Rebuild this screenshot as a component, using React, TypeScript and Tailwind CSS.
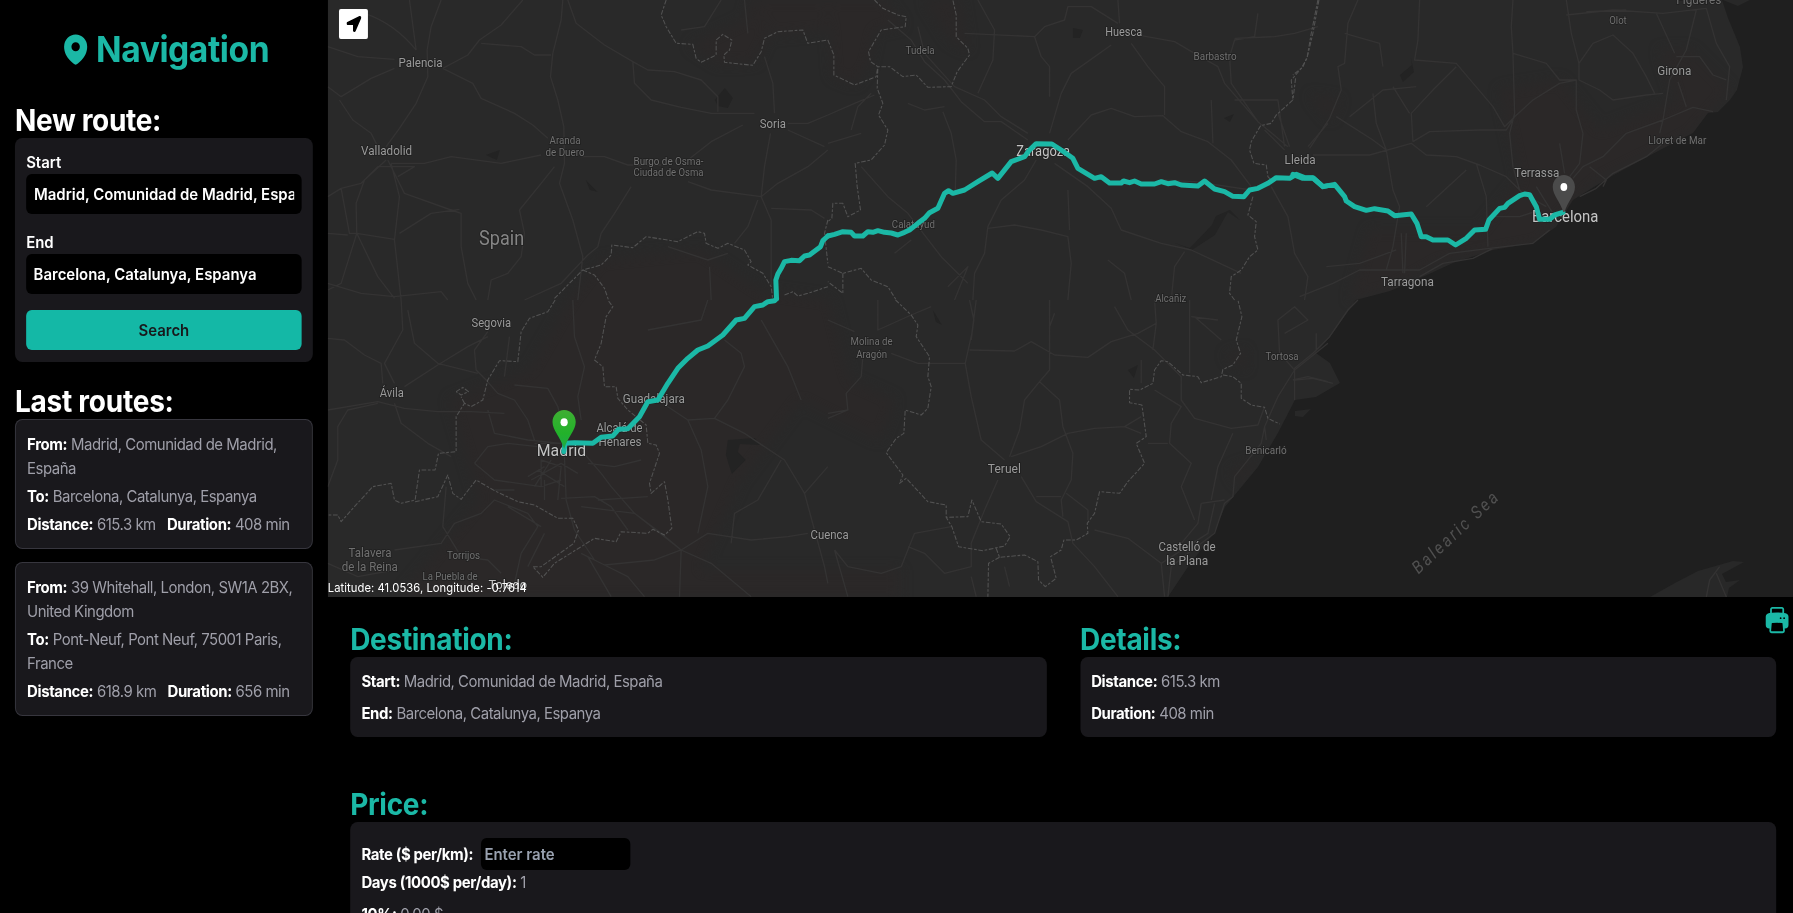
import { FaLocationArrow } from "react-icons/fa";
import { HiMapPin, HiPrinter } from "react-icons/hi2";

type Sector = {
  x: number;
  y: number;
  roads: string;
  borders: string;
  route: string;
};

// The map is drawn in sectors; each one has three units to the pixel.
const sectors: Sector[] = [
  {
    x: 328,
    y: 0,
    roads:
      "M340 0L310 80L298 150L300 230L265 310L215 385L175 440 M585 0L520 75L455 120L420 165L345 205 M345 205L435 250L460 295L560 340L615 375L660 415 M110 40Q200 70 265 150 M245 0L265 150 M0 140L90 170L200 178 M200 205L130 235L40 290L0 260 M35 300L75 360L130 400L150 440 M705 0L700 60L675 160L668 230L690 300L708 380L710 490L695 550L735 660L765 770L750 900 M720 0L745 70L830 135L915 185L960 210L1040 215L1120 240L1170 290L1170 335 M915 185L920 250L970 300L1060 322L1150 340L1280 340 M460 130L580 140L620 165L670 165 M1380 370L1440 370L1500 345 M1245 375L1150 425L1080 480 M1380 390L1490 440 M1328 400L1310 500L1300 590L1330 660L1330 860 M190 490L290 490L370 470L520 490L640 465 M760 470L830 470L900 495L1000 495 M1080 545L1150 570L1300 590 M1300 590L1350 550L1440 500L1500 450 M1330 625L1450 630L1490 655 M1290 600L1260 680L1220 730 M680 500L640 550L575 630L590 700L580 770L540 820L490 840L480 900 M910 560L860 640L820 700L810 740L780 765L700 850L590 900 M180 480L230 580L370 630L400 640L400 740L420 850L445 900 M190 490L215 590L200 720L220 900 M215 700L310 640L395 628 M175 480L110 540L85 610L87 700L40 850L0 870 M0 590L40 565L65 700L87 700L150 830L200 895 M0 700L60 705 M87 700L200 718 M40 565L100 550L150 500L260 500L210 530 M0 850L100 880L200 890L340 875L360 900 M1020 740L1140 780L1200 760 M1145 800L1150 900 M1060 90L1130 80L1180 0 M1250 0L1260 100 M1310 170L1335 250L1340 340",
    borders:
      "M1015 0L1000 45L1015 80L1045 130L1095 133L1105 175L1120 187L1165 165L1165 120L1185 103L1212 120L1205 150L1188 165L1190 187L1275 196L1300 155L1310 115L1350 95L1425 90L1440 130L1500 120 M680 895L765 810L820 795L850 765L852 735L915 743L955 710L1050 725L1110 695L1130 700L1135 730L1170 745L1200 730L1250 750L1270 785L1260 795L1305 820L1330 860L1335 900 M765 810L800 825L830 865L842 900 M1370 885L1395 875L1410 888L1440 880L1500 860 M1500 660L1490 700L1500 790",
    route: "M1346 896L1344 840L1350 822L1360 805L1370 785L1390 781L1415 782L1430 768L1445 765L1478 740L1485 722L1500 708",
  },
  {
    x: 828,
    y: 0,
    roads:
      "M180 60L250 120L290 185L350 240L400 305L470 365L520 365L600 420 M270 80L290 160L380 260L470 300L520 350L600 400 M450 0L500 90L495 180L450 280 M410 100L620 110L650 80L710 60L720 20L790 20L870 70 M870 0L875 70 M850 135L730 220L700 280L665 400 M620 110L640 170L665 200L665 290 M940 107L1040 125L1100 160L1170 200L1190 250L1290 365L1380 440 M910 130L960 200L1010 260L1010 345 M720 420L790 345L850 325L920 350L1005 347L1060 395L1140 425L1210 480L1270 560 M1290 40L1280 110L1220 120L1205 170L1210 250L1290 365 M1220 115L1340 110L1400 100L1470 80 M1350 340L1385 440 M1440 440L1500 370 M1310 390L1370 450 M625 480L590 540L520 600L480 680L470 760L440 820L435 900 M680 490L780 560L850 625L880 690L1000 730L1090 750L1240 820 M480 685L560 675L640 690L720 710L730 790L720 900 M720 570L725 690 M1070 755L1040 800L1030 900 M840 780L890 820L910 900 M100 500L180 590L240 640L340 770L420 850 M0 430L100 400 M345 335L370 400L385 480L382 580 M130 280L90 320L70 390 M0 345L80 310L140 285 M240 310L290 330L350 320 M1150 300L1155 430 M1220 300L1350 300L1370 440 M1270 570L1100 545L1000 540 M1330 560L1380 650L1400 760L1440 830L1430 900 M380 900L420 800L360 860 M200 760L250 720",
    borders:
      "M140 0L165 25L210 45L235 50L232 80L160 90L122 155L128 185L150 200L148 265L165 310L152 345L180 390L170 435L130 480L82 490L88 560L98 630L60 650L45 610L15 610L12 655L0 665 M0 120L18 165L18 225L80 255L145 230L150 200L185 200L225 230L265 225L300 262L370 260L388 215L425 165L420 145L385 110L385 45L375 0 M1470 0L1450 100L1438 170L1425 200L1390 240L1395 300L1345 345L1330 370L1298 377L1270 425L1265 450L1278 490L1315 495L1320 530L1335 545 M1275 590L1260 645L1285 665L1280 710L1290 750L1265 770L1240 810L1210 830L1205 880L1220 900 M0 800L45 820L100 805L130 840L180 860L205 900 M45 820L45 880L0 845",
    route:
      "M0 708L20 703L45 695L70 697L80 708L105 708L120 695L135 697L150 692L170 697L190 699L210 705L230 697L245 690L270 670L290 655L305 638L330 625L350 580L362 572L375 580L410 570L450 545L493 519L510 535L550 485L590 470L605 450L625 431L672 432L700 450L735 475L750 505L775 520L800 535L820 530L845 549L880 549L887 543L905 548L920 543L940 552L980 552L1000 545L1020 551L1040 548L1060 555L1110 558L1130 543L1160 567L1190 575L1215 589L1248 590L1265 570L1290 565L1320 550L1345 533L1385 535L1405 523L1430 533L1455 533L1485 560L1500 557",
  },
  {
    x: 1293,
    y: 0,
    roads:
      "M195 0L165 70L155 190L135 200L145 270L110 355L50 445 M155 100L260 130L270 200 M380 0L375 120L365 180L490 190L600 320L635 380L665 350L720 300L800 250L850 240 M660 0L655 80L660 160L665 340L650 400L660 500L680 570 M660 160L760 190L800 240L850 240L850 330L870 400L860 490L830 530 M820 0L835 100L858 190L858 240L920 270L960 300L1060 285L1110 280 M858 190L900 130L960 105L1020 160L1060 230L1085 280 M1090 40L1145 160 M1210 30L1180 150L1130 240L1110 360L1100 400 M820 45L960 30L1110 40L1240 25L1270 130L1310 200L1300 300 M1150 170L1220 170L1260 225L1300 240 M1155 245L1180 320 M1260 335L1200 322L1110 360L1000 400L930 470L870 500L840 535 M1110 430L1060 470L960 520L910 565L860 590 M890 500L940 540L930 560 M60 465L230 465L355 430L400 465L490 470L560 495L640 530L690 580L760 620 M360 425L410 395L560 390L640 390L665 350 M360 425L355 340L420 270L490 200 M280 450L300 570L320 620L300 740L280 810 M325 700L330 820 M340 700L335 820 M550 490L580 590L585 740 M520 510L400 620 M240 280L250 370L280 450 M300 260L350 340 M130 350L240 420L280 450 M20 890L120 850L200 810L380 810L470 760L590 745L720 730L770 690 M380 830L450 790L540 775L600 745 M310 750L200 790L100 800 M590 650L680 650L740 630 M730 560L780 640 M800 430L815 520 M880 35L1000 30 M170 350L270 270L370 260",
    borders: "M78 0L60 100L42 175L25 205L0 225 M8 235L0 300",
    route:
      "M0 523L30 535L60 534L90 560L125 553L155 590L160 603L185 620L220 631L245 626L285 633L305 647L355 642L372 670L385 710L400 710L420 720L465 720L488 735L520 715L545 690L578 688L588 660L620 625L635 622L645 610L680 587L695 582L710 584L730 620L740 658L770 658L785 645L810 637",
  },
  {
    x: 328,
    y: 300,
    roads:
      "M220 0L225 90L170 190L200 250 M0 115L50 120L110 165L160 190L165 250 M240 30L260 130L330 190L450 220 M230 260L330 195L420 140L480 110 M480 95L440 150L445 210L475 240L510 280L560 300L600 360L620 420 M545 110L530 230 M0 330L150 305L230 325L330 335L430 335L530 340 M200 310L220 370L300 430L370 470 M150 310L60 330L30 380L30 480L0 560 M480 330L500 400L600 420L700 430 M735 0L740 110L770 200L750 290L760 360 M560 255L660 265L690 320L710 400 M440 490L480 440L540 430L630 440 M440 490L500 540L640 560L700 540 M710 470L715 600L740 690L800 780L900 830L950 890 M640 560L640 480L700 500L690 600 M600 530L650 500 M610 540L700 490L750 520 M760 450L820 520L850 560L920 640L1060 750 M780 490L860 500L940 480 M810 600L960 590 M700 595L800 590L850 620L900 690 M1060 750L1000 700L920 640L760 620 M1060 750L980 780L830 795L760 760 M1060 750L1140 700L1270 720L1380 710L1440 700 M1060 750L1055 890 M1060 750L1150 790L1270 890 M355 560L345 680L400 770L480 780L520 820 M380 670L460 640L500 600L600 640L630 680L580 760L560 850 M200 750L340 730L380 670 M0 790L90 830L200 810 M650 700L600 800 M780 770L850 890 M990 300L1080 360L1160 355L1250 400L1370 480L1430 580L1460 690 M1160 355L1200 300L1250 200L1240 160L1190 120 M1080 360L1120 450L1140 560L1110 700 M1430 580L1500 500 M1460 690L1490 800L1500 850 M1360 480L1290 600L1220 640L1210 730 M1300 60L1380 200L1420 300 M540 620L640 680 M500 570L560 570 M960 90L1120 60L1140 0 M620 430L690 430 M630 510L710 560 M650 540L650 600 M670 480L620 560",
    borders:
      "M682 0L660 35L605 55L580 95L570 185L515 182L480 240L465 300L430 320L410 310L385 350L385 455L332 460L322 510L275 510L262 600L220 610L200 600L190 550L135 560L80 620L40 665L30 645L0 645 M262 605L330 590L360 525L375 580L400 598L445 540L500 572L570 605L620 615L690 655L735 655L752 690L738 730L640 800L615 800L645 832L680 790L800 715L865 725L880 695L960 700L975 688L1010 705L1032 685L1020 600L1010 545L970 580L965 550L995 460L985 435L960 430L955 375L900 330L870 295L865 260L830 260L825 200L800 180L820 130L835 50L855 20L840 0 M385 275L405 262L422 275L400 285L385 275 M410 310L400 290",
    route:
      "M708 455L712 430L740 428L795 430L820 412L855 408L872 388L900 386L935 350L960 305L990 300L1020 250L1050 205L1080 175L1110 150L1140 138L1185 105L1225 60L1250 55L1280 20L1305 15L1320 5L1340 2L1346 -4",
  },
  {
    x: 828,
    y: 300,
    roads:
      "M445 0L432 100L412 190L430 290L460 420L530 480 M425 0L438 60L430 120 M425 150L560 153L610 125L680 165L780 172L850 125L930 100L985 70 M412 190L270 190L190 160 M680 40L665 80L665 210L635 245L590 300L575 390L545 470 M665 0L665 80 M635 245L695 300L705 380L735 460L730 540L700 600L705 650 M550 470L640 440L720 400L800 385L890 380L940 400 M890 380L940 350 M580 530L625 605L720 665L735 730L800 800L870 890 M510 540L470 630L430 730L430 800L350 820L290 760L240 740 M800 690L900 715L1000 790L1010 890 M0 340L60 330L55 280L100 230L105 170 M60 330L0 355 M0 60L80 95 M150 0L150 90L250 45L310 20 M860 20L900 90L980 150L1060 230L1060 300L1100 355L1210 385L1290 375L1310 320 M980 270L1060 320L1030 370L1025 430L1090 490L1060 560L1100 660 M960 430L1020 430 M940 180L940 250 M980 0L985 70L975 150 M1085 0L1085 220 M1090 50L1170 60 M1100 50L1180 120 M1370 100L1440 60L1400 20L1350 60L1355 160L1400 210 M1500 130L1400 210L1350 290L1310 380L1300 430L1220 530L1215 590L1190 610L1160 700L1080 760L1030 800L1020 890 M1120 610L1190 600 M1120 610L1110 670L1060 730 M1215 400L1170 500L1150 600 M20 750L60 800L160 820L220 800L260 700L370 680 M20 750L60 890 M430 830L445 890 M530 800L545 860 M715 580L780 630L780 660 M1310 380L1315 420 M1395 240L1440 230L1500 245 M625 590L700 590 M1160 610L1140 700L1000 790",
    borders:
      "M203 0L250 45L270 75L265 110L305 170L300 230L310 260L300 325L280 345L232 330L228 400L205 415L175 458L225 525L215 550L235 535L300 605L355 615L355 652L420 650L432 600L460 665L520 672L547 710L530 738L465 752L392 740L372 680L355 652 M505 745L515 772L590 765L630 785L632 840L652 860L685 835L668 770L700 750L708 720L745 720L780 700L778 670L800 640L815 575L875 580L900 545L950 490L925 430L955 410L942 315L905 308L905 268L935 270L975 250L980 210L1000 182L1020 185L1065 225L1110 230L1120 248L1180 230L1185 208L1215 195L1238 160L1225 120L1242 50L1230 0 M515 772L482 790L480 890 M1185 225L1215 230L1240 250L1240 295L1270 315L1310 322L1320 355L1355 372",
    route: "",
  },
  {
    x: 1293,
    y: 300,
    roads: "M195 0L165 30L110 110L60 160L5 205L5 300 M5 240L60 235L120 250 M70 100L70 150 M1280 800L1250 840L1240 891 M1270 820L1300 891",
    borders: "",
    route: "",
  },
];

type Label = [text: string, x: number, width: number, y: number, size: number, color: string];

const town = "#9a9a9a";
const dim = "#707070";
const city = "#c4c4c4";

const labels: Label[] = [
  ["Palencia", 398.7, 44, 67, 12.6, town],
  ["Valladolid", 361.3, 51, 155.3, 12.6, town],
  ["Aranda", 549.7, 31, 144, 11, dim],
  ["de Duero", 545.7, 39, 156, 11, dim],
  ["Burgo de Osma-", 633.7, 70, 164.7, 11, dim],
  ["Ciudad de Osma", 633.7, 70, 176.3, 11, dim],
  ["Soria", 760, 26, 128, 12.6, town],
  ["Spain", 479.3, 45, 245.5, 20, "#858585"],
  ["Tudela", 905.7, 29, 53.7, 11, dim],
  ["Huesca", 1105.3, 37, 36, 12.6, town],
  ["Barbastro", 1193.7, 43, 60.3, 11, dim],
  ["Zaragoza", 1016.3, 54, 155.7, 14.5, city],
  ["Calatayud", 892, 43, 228, 11, dim],
  ["Lleida", 1284.7, 31, 164.3, 12.6, town],
  ["Alcañiz", 1155.3, 31, 301.7, 11, dim],
  ["Figueres", 1676.3, 45, 4, 12.6, dim],
  ["Olot", 1609.3, 17.5, 24.3, 11, dim],
  ["Girona", 1657.3, 34, 75, 12.6, town],
  ["Lloret de Mar", 1648.3, 58, 143.7, 11, dim],
  ["Terrassa", 1514.3, 45, 176.9, 12.6, town],
  ["Barcelona", 1532, 66.5, 222.3, 15.8, city],
  ["Tarragona", 1381, 53, 285.7, 12.6, town],
  ["Segovia", 471.7, 39.5, 326.7, 12.6, town],
  ["Ávila", 380, 24, 397, 12.6, town],
  ["Guadalajara", 623, 62, 402.9, 12.6, town],
  ["Alcalá de", 596.7, 46, 432.2, 12.6, town],
  ["Henares", 598.7, 43, 446.3, 12.6, town],
  ["Madrid", 537, 49.5, 456.5, 16.5, city],
  ["Talavera", 348.7, 43, 557, 12.6, dim],
  ["de la Reina", 342, 56, 571.2, 12.6, dim],
  ["Torrijos", 447.3, 33, 559.2, 11, dim],
  ["La Puebla de", 422.7, 55, 580.4, 11, dim],
  ["Toledo", 488.7, 38.5, 589.5, 12.8, city],
  ["Molina de", 850.7, 42, 345.3, 11, dim],
  ["Aragón", 856.3, 31, 357.7, 11, dim],
  ["Teruel", 988, 33, 472.7, 12.6, town],
  ["Cuenca", 810.7, 38, 538.9, 12.6, town],
  ["Castelló de", 1158.7, 57, 551.3, 12.6, town],
  ["la Plana", 1166.3, 42, 565.5, 12.6, town],
  ["Benicarló", 1245.3, 41.5, 454, 11, dim],
  ["Tortosa", 1265.7, 33, 359.7, 11, dim],
];

const wooded =
  "M570 300L530 370L450 400L480 500L400 597L760 597L820 597L900 597L900 570L700 570L740 480L800 400L880 440L895 400L850 380L830 300L760 290L700 250L600 260Z M750 0L770 30L755 62L720 64L690 45L745 20Z M770 35L828 30L828 0L750 0Z M828 0L885 0L903 25L875 30L868 65L855 84L833 75Z M925 0L960 0L968 50L950 40Z M1500 90L1560 80L1600 130L1680 100L1730 90L1690 135L1600 180L1560 215L1540 243L1440 262L1390 290L1350 300L1370 230L1480 230L1520 180Z M1660 50L1690 50L1730 90L1680 110Z M1310 95L1340 100L1330 120Z M1225 355L1245 350L1245 370Z M1230 470L1258 460L1240 485Z";

const lakes =
  "M715 100L725 88L733 98L728 108L718 106Z M1073 28L1083 30L1080 38L1073 38Z M1224 118L1234 114L1230 122Z M486 155L500 150L497 160Z M586 180L598 192L590 190Z M1400 75L1412 65L1411 58L1414 72L1403 82Z M728 440L755 438L760 445L740 444L738 452L746 460L732 474L726 455Z M933 310L942 325L936 322Z M1175 243L1190 248L1212 225L1216 216L1230 210L1240 220L1228 212L1215 235L1192 250Z M1128 370L1138 365L1134 378Z";

function RouteMap() {
  return (
    <svg className="block h-full w-full" viewBox="328 0 1465 597" preserveAspectRatio="none" role="img" aria-label="Route map">
      <defs>
        <linearGradient id="start-pin" x1="0" y1="0" x2="0" y2="1">
          <stop offset="0" stopColor="#3fae33" />
          <stop offset="0.6" stopColor="#22b22a" />
          <stop offset="1" stopColor="#1fa84a" />
        </linearGradient>
        <filter id="soft" x="-5%" y="-5%" width="110%" height="110%" colorInterpolationFilters="sRGB">
          <feGaussianBlur stdDeviation="6" />
        </filter>
      </defs>
      <rect x="328" width="1465" height="597" fill="#292929" />
      <path d={wooded} fill="#2b2828" filter="url(#soft)" />
      <path
        d="M1722 0L1728 18L1740 47L1743 67L1737 90L1730 100L1718 112L1708 113L1693 133L1660 150L1610 177L1573 200L1556 227L1533 243L1493 250L1453 263L1416 280L1390 291L1356 300L1330 337L1316 353L1330 363L1340 383L1316 397L1295 400L1278 433L1258 467L1225 507L1214 533L1188 567L1168 597H1793V0Z"
        fill="#1f1f1f"
      />
      <path
        d="M1650 597L1675 583L1698 571L1712 567L1733 561L1744 562L1722 574L1726 582L1740 580L1729 588L1727 597Z M1295 411L1311 409L1303 417L1295 416Z M1723 0L1750 0L1738 6Z"
        fill="#282828"
      />
      <path d={lakes} fill="#232323" />
      {sectors.map((s) => (
        <g key={`${s.x}-${s.y}`} transform={`translate(${s.x} ${s.y}) scale(0.33333)`} fill="none" strokeLinejoin="round">
          <path d={s.roads} stroke="#343333" strokeWidth="4" />
          <path d={s.borders} stroke="#525252" strokeWidth="3.2" strokeDasharray="14 5 8 5" />
        </g>
      ))}
      <g fontFamily="Roboto, 'Noto Sans', sans-serif" stroke="#202020" strokeWidth="1.6" paintOrder="stroke">
        {labels.map(([text, x, width, y, size, color]) => (
          <text key={text} x={x} y={y} fontSize={size} fill={color} textLength={width} lengthAdjust="spacingAndGlyphs">
            {text}
          </text>
        ))}
        <text
          transform="translate(1418.5 574.5) rotate(-43)"
          fontSize="17.5"
          fontStyle="italic"
          fill="#505050"
          letterSpacing="2.8"
          textLength="113"
          lengthAdjust="spacingAndGlyphs"
        >
          Balearic Sea
        </text>
      </g>
      {sectors.map((s) => (
        <path
          key={`${s.x}-${s.y}`}
          d={s.route}
          transform={`translate(${s.x} ${s.y}) scale(0.33333)`}
          fill="none"
          stroke="#1bb8a6"
          strokeWidth="15"
          strokeLinejoin="round"
          strokeLinecap="round"
        />
      ))}
      <path
        d="M564.3 410C570.7 410 575.9 415.4 575.9 422C575.9 430 568 437 564.3 449C560.6 437 552.7 430 552.7 422C552.7 415.4 557.9 410 564.3 410Z"
        fill="url(#start-pin)"
      />
      <ellipse cx="564.3" cy="422.3" rx="3.6" ry="4" fill="#fff" />
      <path
        d="M1563.900 175C1570 175 1575 180.400 1575 187C1575 195 1567.500 202 1564.500 212H1563.300C1560.300 202 1552.800 195 1552.800 187C1552.800 180.400 1557.800 175 1563.900 175Z"
        fill="#4b4b4b"
      />
      <ellipse cx="1563.900" cy="187" rx="3.400" ry="4" fill="#fff" />
    </svg>
  );
}

function Field({ label, value }: { label: string; value: string }) {
  return (
    <label className="flex flex-col font-[560]">
      {label}
      <input className="h-10 w-full rounded-md bg-black px-2 outline-none" defaultValue={value} />
    </label>
  );
}

function Fact({ name, value }: { name: string; value: string }) {
  return (
    <p className="tracking-[-0.032em] text-zinc-400">
      <span className="font-[650] tracking-tight text-white">{name}:</span> {value}
    </p>
  );
}

type Trip = { from: string; to: string; distance: string; duration: string };

const trips: Trip[] = [
  { from: "Madrid, Comunidad de Madrid, España", to: "Barcelona, Catalunya, Espanya", distance: "615.3 km", duration: "408 min" },
  { from: "39 Whitehall, London, SW1A 2BX, United Kingdom", to: "Pont-Neuf, Pont Neuf, 75001 Paris, France", distance: "618.9 km", duration: "656 min" },
];

function TripCard({ trip }: { trip: Trip }) {
  return (
    <li className="flex flex-col gap-1 rounded-lg border border-zinc-700/80 bg-[#19181c] p-3">
      <Fact name="From" value={trip.from} />
      <Fact name="To" value={trip.to} />
      <div className="flex gap-3">
        <Fact name="Distance" value={trip.distance} />
        <Fact name="Duration" value={trip.duration} />
      </div>
    </li>
  );
}

export default function App() {
  return (
    <div className="h-screen w-screen overflow-hidden bg-black">
      <div className="flex h-[913px] w-[1920px] origin-top-left scale-x-[0.93385] overflow-hidden bg-black font-['Inter',sans-serif] text-base text-white">
        <aside className="flex w-[351px] shrink-0 flex-col px-4 pt-[29px]">
          <h1 className="flex items-center justify-center gap-1 text-4xl leading-10 font-bold tracking-[-0.013em] text-[#1bb8a6]">
            <HiMapPin className="size-9" />
            Navigation
          </h1>
          <h2 className="mt-[33px] text-3xl font-bold tracking-[-0.012em]">New route:</h2>
          <form className="flex flex-col gap-4 rounded-lg bg-[#19181c] p-3" onSubmit={(e) => e.preventDefault()}>
            <Field label="Start" value="Madrid, Comunidad de Madrid, España" />
            <Field label="End" value="Barcelona, Catalunya, Espanya" />
            <button className="h-10 rounded-md bg-[#14b8a6] font-semibold text-zinc-900">Search</button>
          </form>
          <h2 className="mt-[21px] text-3xl font-bold tracking-[-0.009em]">Last routes:</h2>
          <ul className="flex flex-col gap-[12.5px]">
            {trips.map((t) => (
              <TripCard key={t.from} trip={t} />
            ))}
          </ul>
        </aside>

        <main className="flex min-w-0 flex-1 flex-col">
          <section className="relative h-[597px] shrink-0">
            <RouteMap />
            <button className="absolute top-[9px] left-[12px] flex h-[30px] w-[31px] items-center justify-center rounded-xs bg-white text-black">
              <FaLocationArrow className="size-4" />
            </button>
            <p className="absolute bottom-px left-0 text-xs tracking-[0.006em]">Latitude: 41.0536, Longitude: -0.7614</p>
          </section>

          <section className="relative flex flex-col pt-6 pr-[18px] pl-6">
            <button className="absolute top-[8px] right-[2px] text-[#1bb8a6]">
              <HiPrinter className="size-[30px]" />
            </button>
            <div className="grid grid-cols-2 gap-9">
              <div>
                <h2 className="text-3xl font-bold tracking-[-0.011em] text-[#1bb8a6]">Destination:</h2>
                <div className="flex flex-col gap-2 rounded-lg bg-[#19181c] p-3">
                  <Fact name="Start" value="Madrid, Comunidad de Madrid, España" />
                  <Fact name="End" value="Barcelona, Catalunya, Espanya" />
                </div>
              </div>
              <div>
                <h2 className="text-3xl font-bold tracking-[-0.011em] text-[#1bb8a6]">Details:</h2>
                <div className="flex flex-col gap-2 rounded-lg bg-[#19181c] p-3">
                  <Fact name="Distance" value="615.3 km" />
                  <Fact name="Duration" value="408 min" />
                </div>
              </div>
            </div>
            <h2 className="mt-[49px] text-3xl font-bold tracking-[-0.011em] text-[#1bb8a6]">Price:</h2>
            <div className="flex flex-col rounded-lg bg-[#19181c] px-3 pt-4 pb-3">
              <label className="flex items-center gap-2 font-[650] tracking-tight">
                Rate ($ per/km):
                <input className="h-8 w-40 rounded-md bg-black px-1 font-[560] tracking-normal outline-none placeholder:text-gray-400" placeholder="Enter rate" />
              </label>
              <div className="flex flex-col gap-2">
                <Fact name="Days (1000$ per/day)" value="1" />
                <Fact name="10%" value="0.00 $" />
              </div>
            </div>
          </section>
        </main>
      </div>
    </div>
  );
}
